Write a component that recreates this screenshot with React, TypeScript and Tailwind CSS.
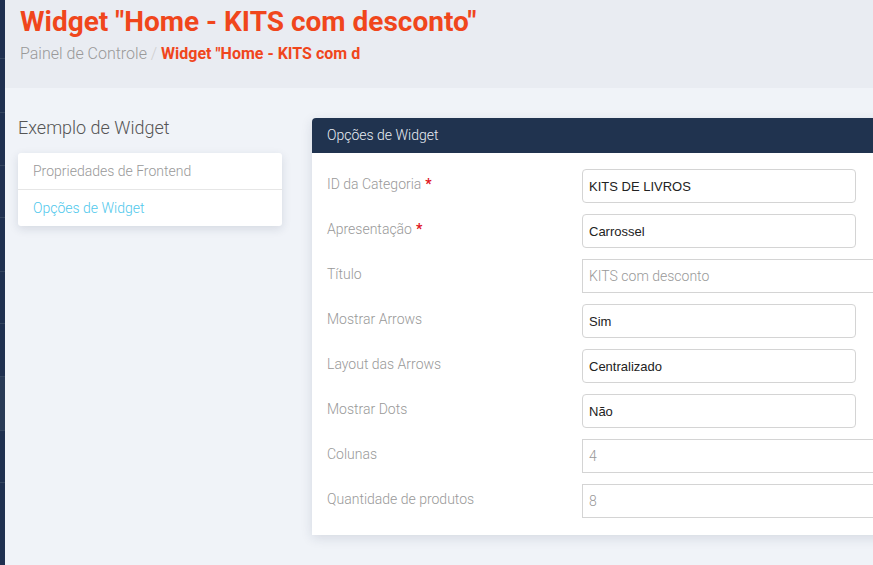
import React from 'react';

const fields = [
  { label: 'ID da Categoria', required: true, value: 'KITS DE LIVROS', kind: 'select' },
  { label: 'Apresentação', required: true, value: 'Carrossel', kind: 'select' },
  { label: 'Título', required: false, value: 'KITS com desconto', kind: 'text' },
  { label: 'Mostrar Arrows', required: false, value: 'Sim', kind: 'select' },
  { label: 'Layout das Arrows', required: false, value: 'Centralizado', kind: 'select' },
  { label: 'Mostrar Dots', required: false, value: 'Não', kind: 'select' },
  { label: 'Colunas', required: false, value: '4', kind: 'text' },
  { label: 'Quantidade de produtos', required: false, value: '8', kind: 'text' },
];

function Sidebar() {
  return (
    <div className="w-[5px] shrink-0 bg-[#1f3050] flex flex-col">
      <div className="h-[59px] border-b border-[#34455f]" />
      <div className="h-[54px] border-b border-[#34455f]" />
      <div className="h-[53px] border-b border-[#34455f]" />
      <div className="h-[52px] border-b border-[#34455f]" />
      <div className="h-[54px] border-b border-[#34455f]" />
      <div className="h-[52px] border-b border-[#34455f]" />
      <div className="h-[53px] border-b border-[#34455f]" />
      <div className="h-[54px] border-b border-[#34455f] bg-[#293a56]" />
      <div className="h-[52px] border-b border-[#34455f]" />
      <div className="flex-1" />
    </div>
  );
}

function FieldRow({ label, required, value, kind }: (typeof fields)[number]) {
  return (
    <div className="flex items-start h-[45px]">
      <div className="w-[255px] shrink-0 pt-[5px] text-[14px] font-light text-[#999] font-['Roboto',sans-serif]">
        {label}
        {required && <span className="text-[#e0141e] font-bold ml-[4px]">*</span>}
      </div>
      {kind === 'select' ? (
        <div className="w-[274px] h-[34px] border border-[#d4d4d4] rounded-[4px] bg-white flex items-center px-[6px] pt-[1px] text-[13px] text-[#222] font-['Liberation_Sans',sans-serif]">
          {value}
        </div>
      ) : (
        <div className="w-[340px] h-[34px] border border-[#d4d4d4] bg-white flex items-center px-[6px] pt-[1px] text-[14px] font-light text-[#999] font-['Roboto',sans-serif]">
          {value}
        </div>
      )}
    </div>
  );
}

export default function App() {
  return (
    <div className="w-[873px] h-[565px] overflow-hidden flex bg-[#f0f3f8] font-['Roboto',sans-serif]">
      <Sidebar />
      <div className="flex-1 flex flex-col min-w-0">
        <div className="h-[88px] bg-[#e9ecf2] px-[15px] pt-[3px]">
          <h1 className="text-[28px] leading-[38px] font-bold text-[#f0461c] whitespace-nowrap">
            Widget "Home - KITS com desconto"
          </h1>
          <div className="text-[16px] leading-[24px] mt-[1px] whitespace-nowrap">
            <span className="text-[#999] font-light">Painel de Controle</span>
            <span className="text-[#cfcfcf] font-light"> / </span>
            <span className="text-[#f0461c] font-bold">Widget "Home - KITS com d</span>
          </div>
        </div>
        <div className="flex pt-[30px] pl-[13px]">
          <div className="w-[264px] shrink-0">
            <div className="text-[18px] leading-[20px] font-light text-[#555] mb-[15px]">Exemplo de Widget</div>
            <div className="bg-white rounded-[3px] shadow-[0_3px_10px_rgba(30,50,80,0.13)] text-[14px] font-light">
              <div className="h-[37px] flex items-center px-[15px] text-[#999] border-b border-[#e6e6e6]">
                Propriedades de Frontend
              </div>
              <div className="h-[36px] flex items-center px-[15px] text-[#4fc8ec]">
                Opções de Widget
              </div>
            </div>
          </div>
          <div className="ml-[30px] w-[640px] shrink-0 bg-white rounded-t-[4px] shadow-[0_3px_12px_rgba(30,50,80,0.13)]">
            <div className="h-[35px] bg-[#20334f] rounded-t-[4px] flex items-center px-[15px] text-[14px] font-light text-[#e8edf3]">
              Opções de Widget
            </div>
            <div className="px-[15px] pt-[16px] pb-[6px]">
              {fields.map((f) => (
                <FieldRow key={f.label} {...f} />
              ))}
            </div>
          </div>
        </div>
      </div>
    </div>
  );
}
